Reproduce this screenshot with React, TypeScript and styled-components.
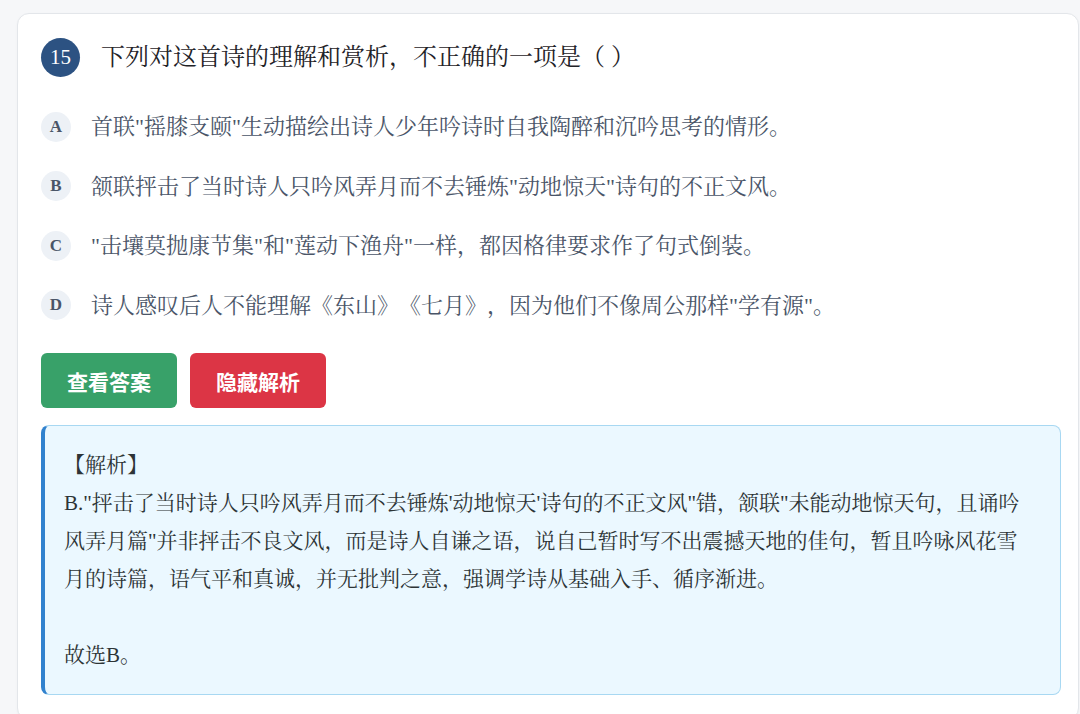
import styled, { createGlobalStyle } from "styled-components";

const serif = `"Liberation Serif", "Noto Serif CJK SC", "Noto Sans CJK SC", serif`;
const sans = `"Noto Sans CJK SC", "Liberation Sans", sans-serif`;

const GlobalStyle = createGlobalStyle`
  html, body {
    margin: 0;
    padding: 0;
    background: #f6f7f9;
    font-family: ${serif};
    text-spacing-trim: space-all;
  }
  * {
    box-sizing: border-box;
  }
`;

const Page = styled.div`
  padding: 13px 1px 0 17px;
  min-height: 714px;
`;

const Card = styled.div`
  background: #ffffff;
  border: 1px solid #e3e6ea;
  border-radius: 12px;
  padding: 24px 17px 24px 23px;
  box-shadow: 0 1px 3px rgba(0, 0, 0, 0.03);
`;

const Header = styled.div`
  display: flex;
  align-items: center;
  gap: 21px;
  margin-bottom: 20px;
`;

const NumberBadge = styled.div`
  width: 39px;
  height: 39px;
  flex-shrink: 0;
  border-radius: 50%;
  background: #2c5282;
  color: #ffffff;
  font-size: 21px;
  display: flex;
  align-items: center;
  justify-content: center;
`;

const Title = styled.h2`
  margin: 0;
  font-size: 24px;
  font-weight: normal;
  color: #1f2328;
  line-height: 39px;
`;

const OptionList = styled.div`
  display: flex;
  flex-direction: column;
`;

const OptionRow = styled.div`
  display: flex;
  align-items: center;
  gap: 20px;
  padding: 12px 0;
`;

const LetterBadge = styled.span`
  width: 30px;
  height: 30px;
  flex-shrink: 0;
  border-radius: 50%;
  background: #edf1f6;
  color: #4a5568;
  font-size: 17px;
  font-weight: bold;
  display: flex;
  align-items: center;
  justify-content: center;
`;

const OptionText = styled.span`
  font-size: 22px;
  color: #4a5568;
  line-height: 35.5px;
`;

const Actions = styled.div`
  display: flex;
  gap: 13px;
  margin-top: 18px;
  margin-bottom: 17px;
`;

const Button = styled.button<{ $tone: "green" | "red" }>`
  height: 55px;
  padding: 0 26px;
  border: none;
  border-radius: 6px;
  background: ${(p) => (p.$tone === "green" ? "#38a169" : "#dc3545")};
  color: #ffffff;
  font-family: ${sans};
  font-size: 21px;
  font-weight: bold;
  cursor: pointer;
`;

const AnalysisBox = styled.div`
  background: #ebf8ff;
  border: 1px solid #a8d8f2;
  border-left: 4px solid #3182ce;
  border-radius: 8px;
  padding: 20px 28px 20px 19px;
  font-size: 21px;
  line-height: 38px;
  color: #2d3436;
`;

const AnalysisLine = styled.div<{ $gap?: boolean }>`
  margin-top: ${(p) => (p.$gap ? "38px" : "0")};
`;

const options = [
  { key: "A", text: "首联\"摇膝支颐\"生动描绘出诗人少年吟诗时自我陶醉和沉吟思考的情形。" },
  { key: "B", text: "颔联抨击了当时诗人只吟风弄月而不去锤炼\"动地惊天\"诗句的不正文风。" },
  { key: "C", text: "\"击壤莫抛康节集\"和\"莲动下渔舟\"一样，都因格律要求作了句式倒装。" },
  { key: "D", text: "诗人感叹后人不能理解《东山》《七月》，因为他们不像周公那样\"学有源\"。" },
];

export default function App() {
  return (
    <>
      <GlobalStyle />
      <Page>
        <Card>
          <Header>
            <NumberBadge>15</NumberBadge>
            <Title>下列对这首诗的理解和赏析，不正确的一项是（ ）</Title>
          </Header>

          <OptionList>
            {options.map((o) => (
              <OptionRow key={o.key}>
                <LetterBadge>{o.key}</LetterBadge>
                <OptionText>{o.text}</OptionText>
              </OptionRow>
            ))}
          </OptionList>

          <Actions>
            <Button $tone="green">查看答案</Button>
            <Button $tone="red">隐藏解析</Button>
          </Actions>

          <AnalysisBox>
            <AnalysisLine>【解析】</AnalysisLine>
            <AnalysisLine>
              B."抨击了当时诗人只吟风弄月而不去锤炼'动地惊天'诗句的不正文风"错，颔联"未能动地惊天句，且诵吟风弄月篇"并非抨击不良文风，而是诗人自谦之语，说自己暂时写不出震撼天地的佳句，暂且吟咏风花雪月的诗篇，语气平和真诚，并无批判之意，强调学诗从基础入手、循序渐进。
            </AnalysisLine>
            <AnalysisLine $gap>故选B。</AnalysisLine>
          </AnalysisBox>
        </Card>
      </Page>
    </>
  );
}
